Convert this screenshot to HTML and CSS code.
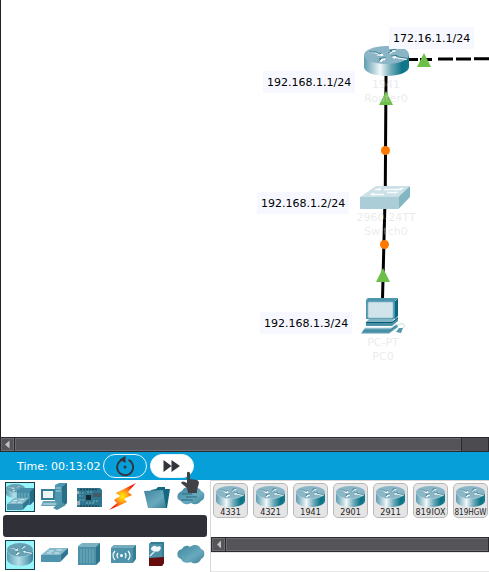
FILE: index.html
```html
<!DOCTYPE html>
<html lang="en">
<head>
<meta charset="utf-8">
<title>Network workspace</title>
<link rel="stylesheet" href="styles.css">
</head>
<body>
<svg class="defs" aria-hidden="true">
  <defs>
    <linearGradient id="steel"><stop offset="0" stop-color="#5d9cb0"/><stop offset=".12" stop-color="#8db9c7"/><stop offset=".36" stop-color="#f2f8f9"/><stop offset=".6" stop-color="#6fabb9"/><stop offset=".85" stop-color="#0d7488"/><stop offset="1" stop-color="#16798d"/></linearGradient>
    <linearGradient id="soft"><stop offset="0" stop-color="#5b9db5"/><stop offset=".45" stop-color="#b4dfe8"/><stop offset="1" stop-color="#37839d"/></linearGradient>
    <linearGradient id="folder" x2="1" y2="1"><stop offset="0" stop-color="#3d869e"/><stop offset=".6" stop-color="#69a9bd"/><stop offset="1" stop-color="#397f95"/></linearGradient>
    <radialGradient id="flash"><stop offset="0" stop-color="#fff200"/><stop offset=".4" stop-color="#ffa51c"/><stop offset="1" stop-color="#f51805"/></radialGradient>
    <g id="arrows">
      <path d="M4.500 6 12 6 15.500 8 18 6.800 19.500 10 12.500 9.500 14.500 8.800 11 7.200 5 7Z M24 7.500 28 4.800 26 4.500 32 3.200 31 6 29.500 5.500 27 7.500Z M14.500 15 17 13.200 15.500 12.700 21.500 11.500 21 14.500 19.500 14 17.500 16Z M27 10.200 33 9.300 32.500 10.700 43.500 12.500 42.500 14 31 12 30.500 13Z" fill="#fff"/>
      <path d="M5 6 12 6 15.500 8 18 6.800 M24 7.300 28 4.800 26 4.500 32 3.200 M14.500 15 17 13.200 15.500 12.700 21.500 11.500 M27 10.200 33 9.300 32.500 10.700 43.500 12.500" fill="none" stroke="#286f82" stroke-width=".9"/>
    </g>
    <symbol id="router" viewBox="0 0 45 30" preserveAspectRatio="none">
      <path d="M0 9V21C0 26 10 30 22.500 30S45 26 45 21V9Z" fill="url(#steel)"/>
      <ellipse cx="22.500" cy="9" rx="22.500" ry="9" fill="#8ab5c6"/>
      <path d="M0 9C0 14 10 18 22.500 18S45 14 45 9" fill="none" stroke="#c1dce4" stroke-width=".8"/>
      <use href="#arrows"/>
    </symbol>
    <symbol id="router-soft" viewBox="0 0 45 30" preserveAspectRatio="none">
      <path d="M0 9V21C0 26 10 30 22.500 30S45 26 45 21V9Z" fill="url(#soft)"/>
      <ellipse cx="22.500" cy="9" rx="22.500" ry="9" fill="#65a2b6"/>
      <path d="M0 9C0 14 10 18 22.500 18S45 14 45 9" fill="none" stroke="#a5ced9"/>
      <use href="#arrows"/>
    </symbol>
    <symbol id="switch" viewBox="0 0 28 14" preserveAspectRatio="none">
      <path d="M0 7 9 0H28L20 7Z" fill="#84bacb"/><path d="M0 7H20V14H0Z" fill="#4f94ad"/><path d="M20 7 28 0V6L20 14Z" fill="#2d7890"/>
      <path d="M8 3h5M16 2h6M6 5h5M14 5h5" stroke="#dceff4"/>
    </symbol>
  </defs>
</svg>
<main class="app">
  <section class="canvas">
    <span class="note n1">172.16.1.1/24</span>
    <span class="note n2">192.168.1.1/24</span>
    <span class="note n3">192.168.1.2/24</span>
    <span class="note n4">192.168.1.3/24</span>
    <svg class="links" width="489" height="437">
      <path d="M409 59.500h9M420 59.500h12M438 59h15M456 59h15M474 58.700h15" stroke="#000" stroke-width="3"/>
      <path d="M386 76 385.300 186M384.800 208 382.500 299" stroke="#000" stroke-width="3"/>
      <g fill="#6cc04a"><path d="M424 53 431 67H417Z"/><path d="M386 91 393 105H379Z"/><path d="M383 268 390 282H376Z"/></g>
      <circle cx="385.500" cy="150.500" r="4.500" fill="#ff7800"/><circle cx="384.500" cy="244.500" r="4.500" fill="#ff7800"/>
      <path d="M364 55V67C364 72 374 76 386.500 76S409 72 409 67V55Z" fill="url(#steel)"/>
      <path d="M364 55C364 50 374 46 386.500 46H389V49H405C408 51 409 53 409 55 409 60 399 64 386.500 64S364 60 364 55Z" fill="#8ab5c6"/>
      <use href="#arrows" x="364" y="46"/>
      <path d="M360 197 376 186H410L399 197Z" fill="#cce1e7"/><path d="M360 197H398.500V209H360Z" fill="#abcdd8"/><path d="M398.500 197 410 186V197L398.500 209Z" fill="#83b6c3"/>
      <path d="M384 189.500h17M375 189.500h6M387 192.500h9M376 194.500h8M371 194.500h5" stroke="#f5fafb" stroke-width="1.500"/><path d="M401 187.500 404 188.500 399 190.500M382 187.500 376 189.500 379 190.500M395 191.500 399 192 394 193.700M374 192.500 370 194.500 374 195.500" fill="#fff"/>
      <path d="M366 299 369 298H398L395 301V319L398 316V298" fill="#096980"/>
      <path d="M366 300 369 298H398L395 300.500Z" fill="#4b98ae"/><path d="M366 300H395V319H366Z" fill="#4e96ad"/><rect x="368" y="302" width="25" height="16" rx="1" fill="#d2e4eb" stroke="#8cbbcb" stroke-width=".7"/>
      <path d="M369 319H394L392 322H366Z" fill="#82b4c3"/><path d="M366 322H392L398 317V321L392 326H366Z" fill="#4a91a8"/><path d="M366 322.500H392L398 318" fill="none" stroke="#005a73"/>
      <path d="M365 328H391L397 324 398 327 389 333.500H361Z" fill="#5b9bb0"/><path d="M365 328H391L397 324" fill="none" stroke="#c0dde5"/><path d="M363 331H389L396 326" fill="none" stroke="#33839b"/>
      <path d="M396 332 399 328H403L401 333Z" fill="#5498ad"/><path d="M398 325C402 322 407 325 403 328" fill="none" stroke="#bddae2"/>
    </svg>
    <p class="device d1">1941<br>Router0</p>
    <p class="device d2">2960-24TT<br>Switch0</p>
    <p class="device d3">PC-PT<br>PC0</p>
  </section>

  <div class="scroll main-scroll"><span class="step"><svg width="11" height="11"><path d="M7.500 1.500V9.500L3 5.500Z" fill="#c2c2c5"/></svg></span><span class="thumb"></span></div>

  <section class="timebar">
    <span class="time">Time: 00:13:02</span>
    <span class="pill"><svg width="42" height="22" viewBox="0 0 42 22"><path d="M18.500 4.600A8 8 0 1 0 24.500 4.900" fill="none" stroke="#33343c" stroke-width="1.800"/><path d="M15.500 4.500 21.500 1V8Z" fill="#33343c"/><circle cx="21" cy="12" r="1.500" fill="#33343c"/></svg></span>
    <span class="pill solid"><svg width="42" height="22" viewBox="0 0 42 22"><path d="M12.500 5 20.500 11 12.500 17ZM20.500 5 29 11 20.500 17Z" fill="#33343c"/></svg></span>
  </section>

  <section class="palette">
    <div class="groups">
      <div class="icons">
        <span class="icon selected"><svg width="30" height="30"><use href="#router-soft" x="1" y="2" width="19" height="14"/><path d="M12 8 16 6H29V19L25 23H12Z" fill="#468ea7"/><path d="M25 10 29 6V19L25 23Z" fill="#216c86"/><path d="M14 11v10M17 11v10M20 11v10M23 11v10" stroke="#79b1c1"/><use href="#switch" x="2" y="16" width="22" height="12"/></svg></span>
        <span class="icon"><svg width="30" height="30"><path d="M16 3 20 1H28V21L23 25H16Z" fill="#4f97b0"/><path d="M23 5 28 1V21L23 25Z" fill="#276f89"/><path d="M17 6h5M17 9h5" stroke="#a9d1dc"/><path d="M2 7H16V18H2Z" fill="#367f98"/><path d="M4 9H14V16H4Z" fill="#edf5f7"/><path d="M4 19H16L19 22 16 24H2Z" fill="#65a3b7"/><path d="M4 22H17" stroke="#d1e5ea"/><path d="M14 26 23 20 27 23 18 28Z" fill="#4d91a7"/></svg></span>
        <span class="icon"><svg width="30" height="30"><path d="M4 6H27L29 8V25H4Z" fill="#2f7691"/><path d="M7 7.500h18M7 24h19" stroke="#1d4656" stroke-width="1.500" stroke-dasharray="2 1"/><path d="M13 13H18V18H13Z" fill="#162830"/><path d="M20 11H28V15H20Z" fill="#465a64"/><path d="M6 11h5M6 14h4M6 18h5M20 19h6M14 10h6M13 21h8" stroke="#7eadb9" stroke-dasharray="2 1"/><path d="M4 9h2v3H4zM4 19h3v4H4z" fill="#9bafb4"/></svg></span>
        <span class="icon"><svg width="30" height="30"><path d="M29 1 9 11 13 14 7 18 10 21 2 28 20 20 17 17 25 13 21 10Z" fill="url(#flash)"/></svg></span>
        <span class="icon"><svg width="30" height="30"><path d="M8 26 10 8 15 7 17 5H24V7H29L26 26Z" fill="#13697f"/><path d="M3 9 22 8 25 26H7Z" fill="url(#folder)"/></svg></span>
        <span class="icon"><svg width="30" height="30"><path d="M7 9C10 3 16 6 17 7C21 4 26 7 26 9C31 10 30 18 26 19C23 23 19 23 16 21C11 24 7 21 6 19C1 18 1 11 7 9Z" fill="url(#folder)"/><path d="M7 12h10M11 15h11M6 18h12" stroke="#367c94" stroke-width="1.500"/></svg></span>
      </div>
      <div class="search"></div>
      <div class="icons">
        <span class="icon selected"><svg width="30" height="30"><use href="#router-soft" x="2" y="3" width="26" height="23"/></svg></span>
        <span class="icon"><svg width="30" height="30"><use href="#switch" x="2" y="8" width="27" height="14"/></svg></span>
        <span class="icon"><svg width="30" height="30"><path d="M5 6 9 3H27V21L23 25H5Z" fill="#7bb1c2"/><path d="M5 7H23V25H5Z" fill="#4c91a8"/><path d="M23 7 27 3V21L23 25Z" fill="#2b748b"/><path d="M8 9v14M11 9v14M14 9v14M17 9v14M20 9v14" stroke="#75adbd"/></svg></span>
        <span class="icon"><svg width="30" height="30"><g transform="translate(1 0)"><path d="M3 8 6 5H28V19L25 23H3Z" fill="#337f96"/><path d="M3 8H25V23H3Z" fill="#4e93aa"/><path d="M3 8 6 5H28L25 8Z" fill="#75acbd"/><g fill="none" stroke="#f4fbfd" stroke-width="1.300"><path d="M7 11Q3 15.500 7 20M10 13Q8 15.500 10 18M17 13Q19 15.500 17 18M20 11Q24 15.500 20 20"/></g><circle cx="13.500" cy="15.500" r="1.500" fill="#fff"/></g></svg></span>
        <span class="icon"><svg width="30" height="30"><g transform="translate(1 -1)"><path d="M7 5 9 3H22V24L20 27H7Z" fill="#327d94"/><path d="M7 5H20V19H7Z" fill="#4a91a8"/><path d="M7 19 22 18V24L20 27H7Z" fill="#650d0d"/><path d="M10 8C12 6 14 7 15 8 18 6 20 9 18 11 17 13 14 13 13 12 9 12 8 10 10 8Z" fill="#f2f8fa"/><path d="M8 17 13 12" stroke="#dcebef" stroke-width="1.500"/></g></svg></span>
        <span class="icon"><svg width="30" height="30"><path d="M7 9C9 5 13 5 15 7C20 3 25 6 26 9C31 10 30 18 26 19C25 23 19 25 16 22C11 24 7 22 6 19C1 18 1 10 7 9Z" fill="url(#folder)"/></svg></span>
      </div>
    </div>
    <div class="models">
      <div class="model-list">
        <span class="model"><svg width="33" height="33"><use href="#router" x="2" y="2" width="29" height="21"/><text x="16.500" y="30.500" textLength="20.500">4331</text></svg></span>
        <span class="model"><svg width="33" height="33"><use href="#router" x="2" y="2" width="29" height="21"/><text x="16.500" y="30.500" textLength="20.500">4321</text></svg></span>
        <span class="model"><svg width="33" height="33"><use href="#router" x="2" y="2" width="29" height="21"/><text x="16.500" y="30.500" textLength="20.500">1941</text></svg></span>
        <span class="model"><svg width="33" height="33"><use href="#router" x="2" y="2" width="29" height="21"/><text x="16.500" y="30.500" textLength="20.500">2901</text></svg></span>
        <span class="model"><svg width="33" height="33"><use href="#router" x="2" y="2" width="29" height="21"/><text x="16.500" y="30.500" textLength="20.500">2911</text></svg></span>
        <span class="model"><svg width="33" height="33"><use href="#router" x="2" y="2" width="29" height="21"/><text x="16.500" y="30.500" textLength="30">819IOX</text></svg></span>
        <span class="model"><svg width="33" height="33"><use href="#router" x="2" y="2" width="29" height="21"/><text x="16.500" y="30.500" textLength="32" lengthAdjust="spacingAndGlyphs">819HGW</text></svg></span>
      </div>
      <div class="scroll"><span class="step"><svg width="11" height="11"><path d="M8 1.500V9.500L4 5.500Z" fill="#c2c2c5"/></svg></span><span class="thumb"></span></div>
      <div class="status"></div>
    </div>
  </section>
  <svg class="cursor" width="20" height="22"><path d="M6 1.500Q8 0 9 2V8L16 9Q18 10 18 12L16 19V22H7L6 17 0 12Q1 9 6 12Z" fill="#414246"/></svg>
</main>
</body>
</html>
```

FILE: styles.css
```css
* { box-sizing: border-box; }
body { margin: 0; background: #fff; font: 11px "DejaVu Sans", sans-serif; }
svg { display: block; overflow: visible; }
.defs { position: absolute; width: 0; height: 0; }
.app { position: relative; width: 489px; height: 572px; overflow: hidden; display: flex; flex-direction: column; }

.canvas { position: relative; flex: 0 0 437px; border-left: 1px solid #222; }
.links { position: absolute; left: -1px; top: 0; }
.note { position: absolute; height: 22px; padding: 1px 4px 0; line-height: 22px; background: #f7f8ff; color: #000; white-space: nowrap; }
.n1 { left: 388px; top: 27px; }
.n2 { left: 262px; top: 71px; }
.n3 { left: 256px; top: 192px; }
.n4 { left: 259px; top: 312px; }
.device { position: absolute; width: 80px; margin: 0; line-height: 14px; text-align: center; color: rgba(215, 215, 215, .5); }
.d1 { left: 345px; top: 78px; }
.d2 { left: 345px; top: 211px; }
.d3 { left: 342px; top: 336px; }

.scroll { display: flex; flex: 0 0 15px; height: 15px; gap: 1px; background: #2b2b2f; border: 1px solid #2b2b2f; }
.step { flex: 0 0 13px; background: #555559; border: 1px solid #6d6d71; }
.thumb { flex: 1; background: #555559; border: 1px solid #6d6d71; border-right: 0; }
.main-scroll { padding-right: 27px; background: linear-gradient(90deg, #2b2b2f 461px, #4b4b50 461px); }

.timebar { flex: 0 0 28px; display: flex; align-items: center; gap: 3px; padding-left: 17px; background: #079fda; color: #fff; }
.time { width: 83px; white-space: nowrap; }
.pill { width: 44px; height: 24px; border: 1px solid #e6f6fc; border-radius: 12px; }
.solid { background: #fff; }

.palette { flex: 1; display: flex; }
.groups { width: 210px; padding: 2px 3px; display: flex; flex-direction: column; gap: 3px; }
.icons { display: flex; gap: 4px; padding-left: 2px; }
.icon { width: 30px; height: 30px; }
.selected { background: #97f5fb; box-shadow: inset 0 0 0 1px #183e42; }
.search { height: 22px; border-radius: 3px; background: #303038; }
.models { flex: 1; min-width: 0; display: flex; flex-direction: column; border-left: 1px solid #d8d8d8; }
.model-list { height: 57px; display: flex; gap: 5px; padding: 2px 0 0 2px; border-top: 1px solid #d5d5d5; overflow: hidden; }
.model { flex: 0 0 35px; height: 35px; border: 1px solid #b9b9b9; border-radius: 5px; background: #e5e5e5; }
.model text { font-size: 8px; text-anchor: middle; fill: #1c1c1c; }
.status { height: 20px; border: solid #e5e5e5; border-width: 1px 0; }
.cursor { position: absolute; left: 181px; top: 471px; }
```
